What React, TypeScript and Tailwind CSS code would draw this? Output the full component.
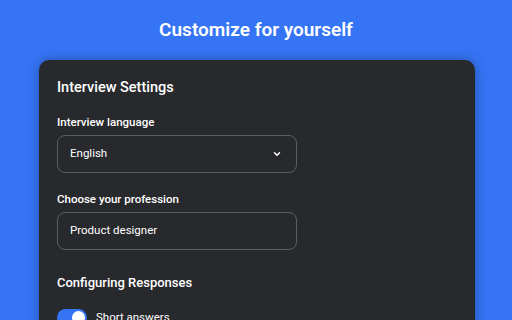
import { ChevronDown } from "lucide-react";

function Field({ label, children }: { label: string; children: React.ReactNode }) {
  return (
    <div className="w-[240px]">
      <p className="text-[11.5px] font-medium leading-4 text-white">{label}</p>
      <div className="mt-[5px] flex h-[38px] items-center justify-between rounded-[8px] border border-[#5b5d63] pl-[12px] pr-[14px] text-[11.5px] text-white">
        {children}
      </div>
    </div>
  );
}

export default function App() {
  return (
    <div className="h-[320px] overflow-hidden bg-[#3574f5] font-['Roboto',sans-serif]">
      <h1 className="pt-[18px] text-center text-[19px] font-semibold leading-6 text-white">
        Customize for yourself
      </h1>
      <div className="ml-[39px] mt-[18px] h-[300px] w-[436px] rounded-t-[10px] bg-[#28292d] pl-[18px] pr-[19px] pt-[18px] shadow-[0_0_12px_rgba(0,0,0,0.3)]">
        <h2 className="text-[14.5px] font-medium leading-5 text-white">Interview Settings</h2>
        <div className="mt-[16px] space-y-[18px]">
          <Field label="Interview language">
            <span>English</span>
            <ChevronDown className="h-[10px] w-[10px] text-white" strokeWidth={3.5} />
          </Field>
          <Field label="Choose your profession">
            <span>Product designer</span>
          </Field>
        </div>
        <h2 className="mt-[23px] text-[13px] font-medium leading-5 text-white">Configuring Responses</h2>
        <div className="mt-[16px] flex items-center gap-[9px]">
          <div className="flex h-[17px] w-[30px] items-center justify-end rounded-full bg-[#3574f5] px-[2px]">
            <div className="h-[13px] w-[13px] rounded-full bg-white" />
          </div>
          <span className="text-[11.5px] text-white">Short answers</span>
        </div>
      </div>
    </div>
  );
}
